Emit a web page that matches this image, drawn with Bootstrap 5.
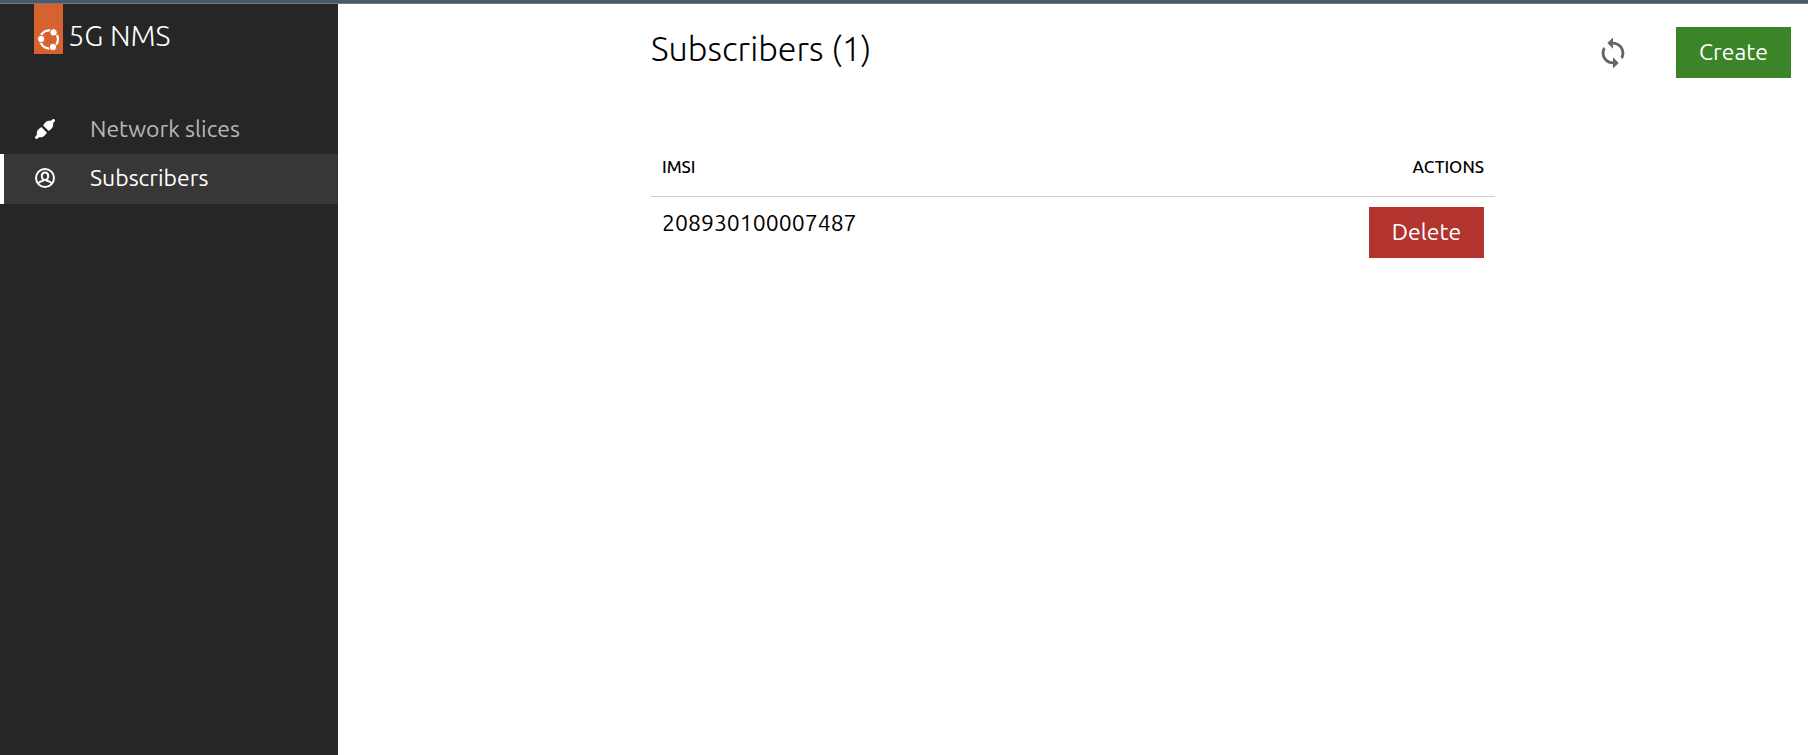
<!DOCTYPE html>
<html lang="en">
<head>
<meta charset="utf-8">
<meta name="viewport" content="width=device-width, initial-scale=1">
<title>5G NMS</title>
<link href="https://cdn.jsdelivr.net/npm/bootstrap@5.3.0/dist/css/bootstrap.min.css" rel="stylesheet">
<style>
  body { font-family: Ubuntu, "Noto Sans", "Open Sans", sans-serif; font-size: 23px; line-height: 28px; color: #000; background: #fff; }
  .topline { height: 4px; background: #4b5a66; border-bottom: 1px solid #6e7b86; }
  .sidebar { width: 338px; background: #262626; }
  .brand { height: 50px; margin-bottom: 52px; padding-left: 34px; gap: 5px; color: #fff; font-size: 29px; font-weight: 300; line-height: 36px; }
  .brand:hover { color: #fff; }
  .brand-name { padding-top: 13px; }
  .side-link { height: 50px; margin-top: -1px; padding: 0 0 2px 30px; gap: 34px; color: #b8b8b8; border-left: 4px solid transparent; }
  .side-link:hover { color: #fff; }
  .side-link.active { color: #fff; background: #373737; border-left-color: #fff; }
  .content-grid { display: grid; grid-template-columns: minmax(0, 1fr) minmax(0, 844px) minmax(0, 1fr); }
  .page-header { padding-top: 23px; }
  .middle { grid-column: 2; }
  .page-title { font-size: 34px; font-weight: 300; line-height: 42px; }
  .tools { gap: 45px; padding-right: 17px; }
  .action { --bs-btn-color: #fff; --bs-btn-hover-color: #fff; --bs-btn-active-color: #fff; --bs-btn-font-size: 23px; --bs-btn-line-height: 28px; width: 115px; height: 51px; padding: 0 0 2px; border: 0; border-radius: 0; }
  .action-create { --bs-btn-bg: #3b8428; --bs-btn-hover-bg: #32721f; --bs-btn-active-bg: #2b641b; }
  .action-delete { --bs-btn-bg: #b3342f; --bs-btn-hover-bg: #9d2c28; --bs-btn-active-bg: #882522; }
  .refresh { width: 36px; height: 36px; color: #666; }
  .subs { margin-top: 60px; --bs-table-color: #000; --bs-table-bg: transparent; }
  .subs > thead th { padding: 15px 11px; font-size: 17px; font-weight: 500; border-bottom: 1px solid #cdcdcd; }
  .subs > tbody td { padding: 10px 11px; border: 0; vertical-align: top; }
  .subs > tbody td:first-child { padding-top: 12px; }
</style>
</head>
<body class="d-flex flex-column min-vh-100">
<div class="topline"></div>
<div class="d-flex flex-grow-1">
  <aside class="sidebar flex-shrink-0">
    <a href="#" class="brand d-flex text-decoration-none">
      <svg width="29" height="50" viewBox="0 0 29 50" aria-hidden="true">
        <path fill="#d6632f" d="M0 0h29v50H0z"/>
        <circle cx="15" cy="35.300" r="9" fill="none" stroke="#fff" stroke-width="2.200"/>
        <g fill="#fff" stroke="#d6632f" stroke-width="1">
          <circle cx="7.200" cy="35" r="3.700"/><circle cx="19.600" cy="28.400" r="3.700"/><circle cx="19" cy="43" r="3.700"/>
        </g>
      </svg>
      <span class="brand-name">5G NMS</span>
    </a>
    <nav class="nav flex-column" aria-label="Main">
      <a href="#" class="side-link d-flex align-items-center text-decoration-none">
        <svg width="22" height="22" viewBox="0 0 22 22" fill="#fff" aria-hidden="true">
          <g transform="rotate(45 11 11)">
            <path d="M11-2.500c.9 0 1.300.5 1.400 1.200l.3 2.500c1.900 1.500 2.800 3.100 2.600 5L15 9.800H7l-.3-3.600c-.2-1.900.7-3.500 2.600-5l.3-2.500c.1-.7.500-1.200 1.400-1.200z"/>
            <path d="M11 24.500c-.9 0-1.300-.5-1.400-1.200l-.3-2.500c-1.900-1.500-2.800-3.100-2.600-5l.3-3.600h8l.3 3.600c.2 1.900-.7 3.500-2.600 5l-.3 2.500c-.1.700-.5 1.200-1.400 1.200z"/>
          </g>
        </svg>
        <span>Network slices</span>
      </a>
      <a href="#" class="side-link active d-flex align-items-center text-decoration-none" aria-current="page">
        <svg width="22" height="22" viewBox="0 0 22 22" fill="none" stroke="#fff" stroke-width="2" aria-hidden="true">
          <circle cx="11" cy="11" r="9"/>
          <path d="M11 5.500c2.200 0 3.200 1.600 3.200 3.600S13 13 11 13 7.800 11.100 7.800 9.100 8.800 5.500 11 5.500z"/>
          <path d="M4.500 16.300c1.100-1.700 2.800-2.300 4.500-2.500l.5-1.300M17.500 16.300c-1.100-1.700-2.800-2.300-4.500-2.500l-.5-1.300"/>
        </svg>
        <span>Subscribers</span>
      </a>
    </nav>
  </aside>
  <main class="flex-grow-1">
    <header class="content-grid page-header">
      <h1 class="page-title middle mb-0">Subscribers (1)</h1>
      <div class="tools d-flex justify-content-end align-items-center">
        <button type="button" class="refresh btn border-0 p-0 d-flex align-items-center justify-content-center" aria-label="Refresh">
          <svg width="34" height="34" viewBox="0 0 24 24" fill="currentColor" aria-hidden="true">
            <path d="M12 4V1L8 5l4 4V6c3.310 0 6 2.690 6 6 0 1.010-.25 1.970-.7 2.800l1.460 1.460C19.540 15.030 20 13.570 20 12c0-4.420-3.580-8-8-8z"/>
            <path d="M12 18c-3.310 0-6-2.690-6-6 0-1.010.25-1.970.7-2.800L5.240 7.740C4.460 8.970 4 10.430 4 12c0 4.420 3.580 8 8 8v3l4-4-4-4v3z"/>
          </svg>
        </button>
        <button type="button" class="btn action action-create">Create</button>
      </div>
    </header>
    <div class="content-grid">
      <div class="middle">
        <table class="subs table mb-0">
          <thead>
            <tr><th scope="col">IMSI</th><th scope="col" class="text-end">ACTIONS</th></tr>
          </thead>
          <tbody>
            <tr><td>208930100007487</td><td class="text-end"><button type="button" class="btn action action-delete">Delete</button></td></tr>
          </tbody>
        </table>
      </div>
    </div>
  </main>
</div>
<script src="https://cdn.jsdelivr.net/npm/bootstrap@5.3.0/dist/js/bootstrap.bundle.min.js"></script>
</body>
</html>
